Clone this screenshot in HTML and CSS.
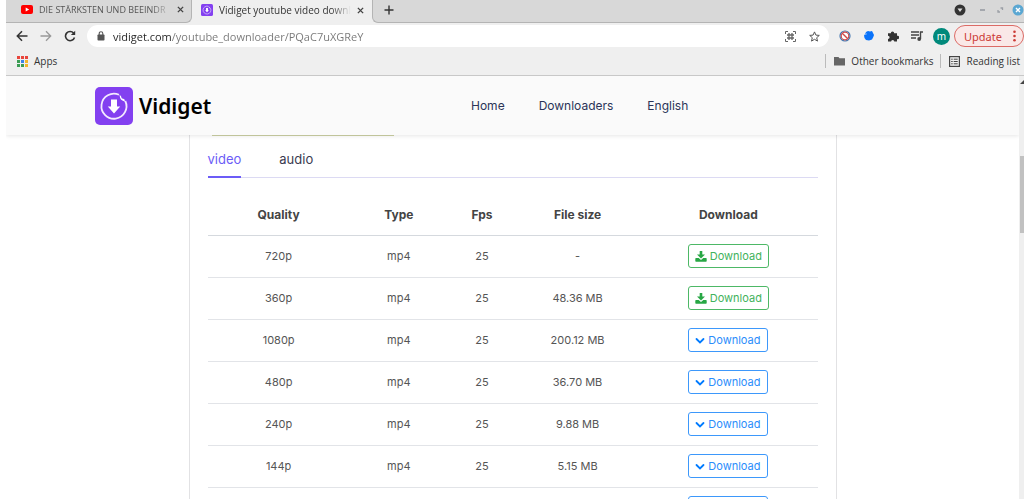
FILE: index.html
```html
<!DOCTYPE html>
<html lang="en">
<head>
<meta charset="utf-8">
<title>Vidiget youtube video downloader</title>
<link rel="stylesheet" href="styles.css">
</head>
<body>
<svg class="defs" width="0" height="0" aria-hidden="true">
  <symbol id="x" viewBox="0 0 8 8"><path d="M1 1l6 6M7 1L1 7" stroke="#444" stroke-width="1.6"/></symbol>
  <symbol id="logo" viewBox="0 0 38 38">
    <rect width="38" height="38" rx="5" fill="#8340f0"/>
    <path d="M24 7.800A12.500 12.500 0 1 0 30.300 14" fill="none" stroke="#f3eafe" stroke-width="1.800"/>
    <path d="M24.500 8l1.500 1q.2 3 3.200 3l1 2.800q-2.700-.8-4-2t-1.700-4.800z" fill="#fff"/>
    <path d="M16 12.500h6v7h3.200L19 26.500l-6.200-7H16z" fill="#fff"/>
  </symbol>
  <symbol id="down" viewBox="0 0 12 12"><path d="M4.700 1h2.600v3.500h2.700L6 8.500 2 4.500h2.700z" fill="#28a745"/><path d="M1 8h2.700L6 10l2.300-2H11q.7 0 .7.700v2.300q0 .7-.7.700H1q-.7 0-.7-.7V8.700q0-.7.700-.7z" fill="#28a745"/></symbol>
  <symbol id="chev" viewBox="0 0 10 12"><path d="M1.500 5l3.500 3.500L8.500 5" fill="none" stroke="#007bff" stroke-width="1.800" stroke-linecap="round"/></symbol>
</svg>

<div class="window">
  <div class="tabstrip">
    <div class="tab">
      <svg width="12" height="9" viewBox="0 0 12 9"><rect width="12" height="9" rx="2" fill="#f00"/><path d="M4.700 2.500l3.500 2-3.500 2z" fill="#fff"/></svg>
      <span class="tab-title">DIE STÄRKSTEN UND BEEINDR</span>
      <button class="plain" aria-label="Close tab"><svg width="7" height="7"><use href="#x"/></svg></button>
    </div>
    <div class="tab active">
      <svg width="12" height="12"><use href="#logo"/></svg>
      <span class="tab-title">Vidiget youtube video downlo</span>
      <button class="plain" aria-label="Close tab"><svg width="7" height="7"><use href="#x"/></svg></button>
    </div>
    <div class="strip-rest">
      <button class="plain" aria-label="New tab"><svg width="10" height="10"><path d="M5 .5v9M.5 5h9" stroke="#333" stroke-width="1.400"/></svg></button>
      <div class="window-buttons">
        <button class="plain" aria-label="Tab search"><svg width="12" height="12"><circle cx="6" cy="6" r="5.500" fill="#333"/><path d="M3.500 4.500h5L6 8z" fill="#ddd"/></svg></button>
        <button class="plain" aria-label="Minimize"><svg width="12" height="12"><path d="M4 6h5" stroke="#888d96" stroke-width="1.300"/></svg></button>
        <button class="plain" aria-label="Restore"><svg width="12" height="12"><path d="M6.500 4h2v2M4 6v2h2" fill="none" stroke="#9a9ea5" stroke-width="1.300"/></svg></button>
        <button class="plain" aria-label="Close"><svg width="12" height="12"><circle cx="6" cy="6" r="5.500" fill="#5ba7d2"/><path d="M4 4l4 4M8 4L4 8" stroke="#fff" stroke-width="1.400"/></svg></button>
      </div>
    </div>
  </div>

  <div class="toolbar">
    <button class="plain tool" aria-label="Back"><svg width="12" height="12"><path d="M11.500 6H1.500M6 1.300L1.300 6 6 10.700" fill="none" stroke="#333" stroke-width="1.500"/></svg></button>
    <button class="plain tool" aria-label="Forward"><svg width="12" height="12"><path d="M.5 6h10M6 1.300L10.700 6 6 10.700" fill="none" stroke="#999" stroke-width="1.300"/></svg></button>
    <button class="plain tool" aria-label="Reload"><svg width="12" height="12"><path d="M9.700 3.200A4.600 4.600 0 1 0 10.500 7.500" fill="none" stroke="#333" stroke-width="1.600"/><path d="M11.200.7V5H6.900z" fill="#333"/></svg></button>
    <div class="address">
      <svg width="8" height="10"><rect x=".5" y="3.500" width="7" height="6" rx=".8" fill="#555"/><path d="M2.200 4V2.500a1.800 1.800 0 0 1 3.600 0V4" fill="none" stroke="#555" stroke-width="1.100"/></svg>
      <input class="url" type="text" aria-label="Address" value="vidiget.com/youtube_downloader/PQaC7uXGReY">
      <button class="plain tool" aria-label="QR code"><svg width="11" height="11" fill="none" stroke="#666"><path d="M.5 3V.5H3M8 .5h2.500V3M10.500 8v2.500H8M3 10.500H.5V8"/><path d="M4 2v7M7 2v7M2 4h7M2 7h7" stroke-width="1.300"/></svg></button>
      <button class="plain tool" aria-label="Bookmark"><svg width="11" height="11" viewBox="0 0 11 11"><path d="M5.500.9l1.400 3.200 3.400.3-2.600 2.300.8 3.400-3-1.800-3 1.800.8-3.400L.7 4.400l3.400-.3z" fill="none" stroke="#555"/></svg></button>
    </div>
    <div class="extensions">
      <button class="plain tool" aria-label="Blocker"><svg width="12" height="12"><circle cx="6" cy="6" r="5" fill="#fff" stroke="#4377b0" stroke-width="1.200"/><circle cx="6" cy="6" r="3.800" fill="none" stroke="#d04848" stroke-width="1.200"/><path d="M3.200 3.200l5.600 5.600" stroke="#d04848" stroke-width="1.400"/></svg></button>
      <button class="plain tool" aria-label="Blue extension"><svg width="12" height="12"><path d="M3 2l2-1 2 .5 2-.5 1 2 1 2-.7 2L9 9.500 6 10.500 3 10 1.500 8 1 5.500 2.200 4z" fill="#0a73fa"/><path d="M2 4.500l2-.7" stroke="#7db8ff"/></svg></button>
      <button class="plain tool" aria-label="Extensions"><svg width="12" height="12"><path d="M1 3.200h2.800a1.700 1.700 0 1 1 3.400 0H10v2.600a1.700 1.700 0 1 1 0 3.300V11.500H7.300a1.600 1.600 0 0 0-3.200 0H1V8.900a1.600 1.600 0 0 0 0-3.200z" fill="#333"/></svg></button>
      <button class="plain tool" aria-label="Media"><svg width="12" height="12"><path d="M0 2h8M0 5h8M0 8h5M9.500 9V2H12" fill="none" stroke="#444" stroke-width="1.400"/><circle cx="8.200" cy="9" r="1.900" fill="#444"/></svg></button>
      <button class="avatar" aria-label="Profile">m</button>
    </div>
    <button class="update">Update <svg width="3" height="12" fill="#cc3a35"><circle cx="1.500" cy="1.700" r="1.300"/><circle cx="1.500" cy="6" r="1.300"/><circle cx="1.500" cy="10.300" r="1.300"/></svg></button>
  </div>

  <div class="bookmarks">
    <a href="#apps"><svg width="11" height="11"><path d="M0 0h3v3H0zM4 0h3v3H4zM8 0h3v3H8z" fill="#e8453c"/><path d="M0 4h3v3H0zM0 8h3v3H0z" fill="#3c9d55"/><path d="M4 4h3v3H4z" fill="#3b82e8"/><path d="M4 8h3v3H4z" fill="#3c9d55"/><path d="M8 4h3v3H8zM8 8h3v3H8z" fill="#f4b42a"/></svg>Apps</a>
    <a class="other" href="#other"><svg width="11" height="10"><path d="M0 1h4.500l1 1.200H11V9.500H0z" fill="#666"/></svg>Other bookmarks</a>
    <a class="reading" href="#reading"><svg width="11" height="11"><rect x=".6" y=".6" width="9.800" height="9.800" fill="none" stroke="#444" stroke-width="1.200"/><path d="M2.200 3.200h1.500m1 0h4M2.200 5.500h1.500m1 0h4M2.200 7.800h1.500m1 0h4" stroke="#444"/></svg>Reading list</a>
  </div>

  <div class="viewport">
    <div class="page">
      <header class="site-header">
        <a class="brand" href="#home"><svg width="38" height="38"><use href="#logo"/></svg>Vidiget</a>
        <nav class="menu"><a href="#home">Home</a><a href="#downloaders">Downloaders</a><a href="#english">English</a></nav>
      </header>
      <main class="card">
        <div class="thumb"></div>
        <div class="tabs" role="tablist">
          <button class="plain media-tab selected" role="tab" aria-selected="true">video</button>
          <button class="plain media-tab" role="tab" aria-selected="false">audio</button>
        </div>
        <table class="formats">
          <colgroup><col class="c-quality"><col class="c-type"><col class="c-fps"><col class="c-size"><col class="c-download"></colgroup>
          <thead><tr><th>Quality</th><th>Type</th><th>Fps</th><th>File size</th><th>Download</th></tr></thead>
          <tbody>
            <tr><td>720p</td><td>mp4</td><td>25</td><td>-</td><td><button class="btn ready"><svg width="12" height="12"><use href="#down"/></svg>Download</button></td></tr>
            <tr><td>360p</td><td>mp4</td><td>25</td><td>48.36 MB</td><td><button class="btn ready"><svg width="12" height="12"><use href="#down"/></svg>Download</button></td></tr>
            <tr><td>1080p</td><td>mp4</td><td>25</td><td>200.12 MB</td><td><button class="btn"><svg width="10" height="12"><use href="#chev"/></svg>Download</button></td></tr>
            <tr><td>480p</td><td>mp4</td><td>25</td><td>36.70 MB</td><td><button class="btn"><svg width="10" height="12"><use href="#chev"/></svg>Download</button></td></tr>
            <tr><td>240p</td><td>mp4</td><td>25</td><td>9.88 MB</td><td><button class="btn"><svg width="10" height="12"><use href="#chev"/></svg>Download</button></td></tr>
            <tr><td>144p</td><td>mp4</td><td>25</td><td>5.15 MB</td><td><button class="btn"><svg width="10" height="12"><use href="#chev"/></svg>Download</button></td></tr>
            <tr><td></td><td></td><td></td><td></td><td><button class="btn" aria-label="Download"></button></td></tr>
          </tbody>
        </table>
      </main>
    </div>
    <div class="scrollbar"><svg width="5" height="4"><path d="M1 4l4-4v4z" fill="#444"/></svg><div class="thumb-bar"></div></div>
  </div>
</div>
</body>
</html>
```
FILE: styles.css
```css
* { box-sizing: border-box; }
body { margin: 0; background: #fff; }
.defs { position: absolute; }
svg { flex: none; display: block; }
a { color: inherit; text-decoration: none; }
.plain { border: 0; padding: 0; background: none; font: inherit; color: inherit; display: flex; align-items: center; justify-content: center; }

.window { height: 100vh; overflow: hidden; display: flex; flex-direction: column; padding-left: 6px; font-family: "Noto Sans", "Open Sans", sans-serif; font-size: 11px; color: #333; }

/* Browser frame */
.tabstrip { flex: none; height: 23px; display: flex; background: #efefef; }
.tab { width: 186px; flex: none; display: flex; align-items: center; gap: 6px; padding: 0 7px 3px 15px; background: #d8d8d8; border-right: 1px solid #b4b4b4; border-bottom: 1px solid #b4b4b4; border-radius: 0 0 6px 0; color: #555; font-family: "Open Sans", sans-serif; font-size: 9px; }
.tab-title { flex: 1; min-width: 0; overflow: hidden; white-space: nowrap; -webkit-mask-image: linear-gradient(to right, #000 85%, transparent); mask-image: linear-gradient(to right, #000 85%, transparent); }
.tab.active { width: 180px; padding-left: 9px; padding-right: 8px; background: #efefef; border: 0; color: #333; font-size: 10px; }
.strip-rest { flex: 1; display: flex; justify-content: space-between; align-items: center; padding: 0 0 3px 11px; background: #d8d8d8; border-left: 1px solid #b4b4b4; border-bottom: 1px solid #b4b4b4; border-radius: 0 0 0 6px; }
.window-buttons { display: flex; gap: 6px; }
.window-buttons button:first-child { margin-right: 4px; }

.toolbar { flex: none; height: 26px; display: flex; align-items: center; padding-left: 4px; background: #efefef; }
.tool { width: 24px; height: 22px; }
.address { flex: 1; min-width: 0; height: 22px; margin: 0 4px 0 5px; display: flex; align-items: center; background: #fff; border-radius: 11px; padding: 0 3px 0 10px; }
.url { flex: 1; min-width: 0; border: 0; outline: 0; padding: 0; margin-left: 8px; font: inherit; font-family: "Open Sans", sans-serif; color: transparent; background: linear-gradient(to right, #222 59px, #777 59px); -webkit-background-clip: text; background-clip: text; }
.extensions { display: flex; align-items: center; }
.avatar { width: 17px; height: 17px; margin: 0 4px; border: 0; border-radius: 50%; padding: 0; background: #00897b; color: #fff; font: inherit; font-size: 10px; line-height: 14px; }
.update { height: 22px; width: 70px; display: flex; align-items: center; justify-content: space-between; border: 1px solid #dc6b66; border-radius: 11px; padding: 0 7px 0 9px; background: #fae8e7; color: #cc3a35; font: inherit; }

.bookmarks { flex: none; height: 27px; display: flex; align-items: center; padding: 0 4px 2px 11px; background: #efefef; border-bottom: 1px solid #c8c8c8; font-family: "Open Sans", sans-serif; font-size: 10px; }
.bookmarks a { display: flex; align-items: center; gap: 6px; height: 14px; }
.bookmarks .other { margin-left: auto; padding: 0 7px 0 8px; border-left: 1px solid #bbb; }
.bookmarks .reading { padding-left: 8px; border-left: 1px solid #bbb; }

.viewport { flex: 1; min-height: 0; display: flex; }
.page { flex: 1; min-width: 0; overflow: hidden; font-family: Inter, "Open Sans", sans-serif; }
.scrollbar { flex: none; width: 5px; background: #efefef; padding-top: 4px; }
.thumb-bar { height: 77px; margin: 72px 0 0 1px; background: #c1c1c1; }

/* Site */
.site-header { position: relative; height: 59px; display: flex; align-items: center; background: #fafafa; box-shadow: 0 1px 4px rgba(0, 0, 0, .1); padding-left: 89px; }
.brand { width: 376px; display: flex; align-items: center; gap: 6px; font-family: "Noto Sans", sans-serif; font-size: 21px; font-weight: 600; color: #000; }
.menu { display: flex; gap: 34px; font-size: 12px; color: #2b3458; }

.card { max-width: 648px; margin: 0 auto; padding: 0 18px; border: solid #e2e2e4; border-width: 0 1px; }
.thumb { position: relative; height: 1px; width: 182px; margin-left: 4px; background: #c0c49a; }
.tabs { display: flex; gap: 38px; height: 42px; border-bottom: 1px solid #dcdaf3; }
.media-tab { height: 42px; padding-top: 6px; border-bottom: 2px solid transparent; font-size: 13px; color: #3b3b50; }
.media-tab.selected { color: #6c5cf7; border-bottom-color: #6c5cf7; }
.formats { width: 100%; margin-top: 15px; table-layout: fixed; border-collapse: collapse; font-size: 11px; color: #555; text-align: center; }
.c-quality { width: 142px; }
.c-type { width: 98px; }
.c-fps { width: 68px; }
.c-size { width: 123px; }
.c-download { width: 178px; }
.formats th { height: 42px; padding: 2px 0 0; border-bottom: 1px solid #d5d9de; color: #444; font-size: 12px; font-weight: 700; }
.formats td { height: 42px; padding: 0; border-bottom: 1px solid #e2e4e8; }
.btn { display: inline-flex; align-items: center; gap: 3px; min-width: 80px; height: 24px; padding: 0 6px; border: 1px solid #3d98fb; border-radius: 3px; background: #fff; color: #2b8dfb; font: inherit; vertical-align: middle; }
.btn.ready { border-color: #4db866; color: #42b25c; }
```
